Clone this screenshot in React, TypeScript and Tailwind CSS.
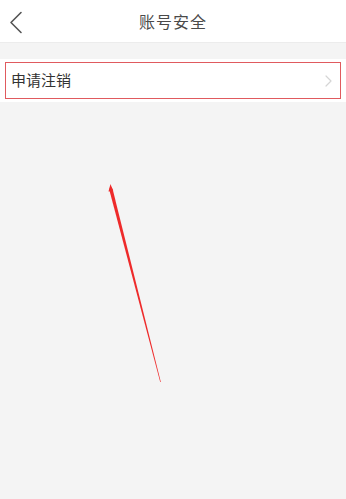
import React from 'react';

export default function App() {
    return (
        <div className="relative w-[346px] h-[499px] bg-[#f4f4f4] overflow-hidden" style={{ fontFamily: '"Noto Sans CJK SC", "Noto Sans", sans-serif' }}>
            {/* Header */}
            <div className="relative h-[43px] bg-white border-b border-[#ececec] flex items-center justify-center">
                <svg className="absolute left-[9px] top-[11px] w-[14px] h-[23px]" viewBox="0 0 14 23" fill="none">
                    <path d="M12 1.5 L2 11.5 L12 21.5" stroke="#555" strokeWidth="1.6" strokeLinecap="round" strokeLinejoin="round" />
                </svg>
                <span className="text-[16px] text-[#4a4a4a] tracking-[1px]">账号安全</span>
            </div>

            {/* List */}
            <div className="mt-[16px] bg-white px-[5px] py-[3px]">
                <div className="h-[37px] border-[1.5px] border-[#e05a5e] flex items-center justify-between pl-[5px] pr-[8px]">
                    <span className="text-[15px] text-[#333]">申请注销</span>
                    <svg className="w-[7px] h-[12px]" viewBox="0 0 7 12" fill="none">
                        <path d="M1 1 L6 6 L1 11" stroke="#d5d5d5" strokeWidth="1.2" strokeLinecap="round" strokeLinejoin="round" />
                    </svg>
                </div>
            </div>

            {/* Annotation arrow */}
            <svg className="absolute left-0 top-0 w-[346px] h-[499px] pointer-events-none" viewBox="0 0 346 499">
                <polygon points="110.5,186 112.6,189 160.8,382 160.2,382 109.2,189.5" fill="#ee2a2a" />
                <polygon points="110.5,184 113.2,191 108.5,191.5" fill="#ee2a2a" />
            </svg>
        </div>
    );
}
